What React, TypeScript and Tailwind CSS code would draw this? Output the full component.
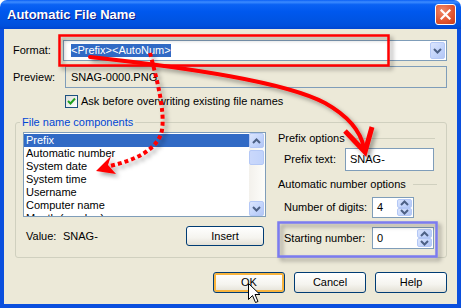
import React from "react";

const items = [
  "Prefix",
  "Automatic number",
  "System date",
  "System time",
  "Username",
  "Computer name",
  "Month (number)",
];

function Chevron({ up = false }: { up?: boolean }) {
  return (
    <svg width="9" height="6" viewBox="0 0 9 6">
      <path
        d={up ? "M1 5 L4.5 1.5 L8 5" : "M1 1 L4.5 4.5 L8 1"}
        fill="none"
        stroke="#4d6185"
        strokeWidth="2"
      />
    </svg>
  );
}

function ArrowBox({ up = false, className = "" }: { up?: boolean; className?: string }) {
  return (
    <div
      className={`flex items-center justify-center rounded-[2px] border border-[#b4c8f6] bg-[linear-gradient(135deg,#dbe5fd,#c1d3fb_60%,#b3c6f4)] ${className}`}
    >
      <Chevron up={up} />
    </div>
  );
}

function Spin({ value, w, h }: { value: string; w: string; h: string }) {
  return (
    <div className={`flex ${w} ${h} border border-[#7f9db9] bg-white`}>
      <div className="flex flex-1 items-center pl-[4px]">{value}</div>
      <div className="flex w-[16px] flex-col py-[1px] pr-[1px]">
        <ArrowBox up className="flex-1" />
        <ArrowBox className="flex-1" />
      </div>
    </div>
  );
}

function XpButton({ label, focused = false, w = "w-[72px]", h = "h-[21px]" }: { label: string; focused?: boolean; w?: string; h?: string }) {
  return (
    <div
      className={`flex ${w} ${h} items-center justify-center rounded-[3px] border border-[#003c74] bg-[linear-gradient(180deg,#ffffff_0%,#f5f4ef_60%,#e3e0d5_100%)] ${
        focused ? "shadow-[inset_0_0_0_2px_#f7b43e]" : ""
      }`}
    >
      {label}
    </div>
  );
}

function Heading({ text, endGap }: { text: string; endGap: string }) {
  return (
    <div className="flex h-[13px] items-center">
      <span>{text}</span>
      <div className={`ml-[7px] h-px flex-1 bg-[#d0d0bf] ${endGap}`} />
    </div>
  );
}

export default function App() {
  return (
    <div className="relative h-[308px] w-[461px] overflow-hidden bg-white font-['Liberation_Sans',Arial,sans-serif] text-[11px] leading-[13px] text-black">
      <div className="flex h-full w-full flex-col">
        {/* title bar */}
        <div className="flex h-[29px] shrink-0 items-center justify-between rounded-t-[7px] bg-[linear-gradient(180deg,#0a5ff5_0%,#3d8cff_7%,#0a62f4_16%,#0058ee_40%,#0054e3_70%,#0050dc_88%,#0046d2_100%)] pl-[7px] pr-[5px]">
          <span className="text-[13px] font-bold text-white [text-shadow:1px_1px_0_#0a1883]">
            Automatic File Name
          </span>
          <div className="flex h-[21px] w-[21px] items-center justify-center rounded-[3px] border border-white bg-[radial-gradient(circle_at_35%_30%,#f08a6a,#e0532f_60%,#c83c18)]">
            <svg width="11" height="11" viewBox="0 0 11 11">
              <path d="M1.5 1.5 L9.5 9.5 M9.5 1.5 L1.5 9.5" stroke="#fff" strokeWidth="2.2" strokeLinecap="square" />
            </svg>
          </div>
        </div>

        {/* body */}
        <div className="flex flex-1 flex-col border-x-4 border-b-4 border-[#0a4fde] bg-[#ece9d8] pl-[9px] pr-[10px]">
          <div className="mt-[11px] flex h-[21px] items-center">
            <div className="w-[50px]">Format:</div>
            <div className="flex h-[21px] flex-1 items-center border border-[#7f9db9] bg-white pl-[7px] pr-[1px]">
              <span className="h-[13px] bg-[#316ac5] text-white">&lt;Prefix&gt;&lt;AutoNum&gt;</span>
              <ArrowBox className="ml-auto h-[17px] w-[15px]" />
            </div>
          </div>

          <div className="mt-[5px] flex h-[22px] items-center">
            <div className="w-[52px]">Preview:</div>
            <div className="flex h-[22px] flex-1 items-center border border-[#7f9db9] pl-[5px]">SNAG-0000.PNG</div>
          </div>

          <div className="mt-[7px] flex h-[13px] items-center">
            <div className="w-[52px]" />
            <div className="flex h-[13px] w-[13px] items-center justify-center border border-[#1c5180] bg-[linear-gradient(135deg,#dcdcd7,#ffffff)]">
              <svg width="9" height="9" viewBox="0 0 9 9">
                <path d="M1 4 L3.5 6.5 L8 1.5" fill="none" stroke="#21a121" strokeWidth="2" />
              </svg>
            </div>
            <span className="ml-[3px]">Ask before overwriting existing file names</span>
          </div>

          <fieldset className="ml-[2px] mt-[7px] h-[143px] rounded-[3px] border border-[#d0d0bf] px-[7px] pt-[3px]">
            <legend className="-ml-[3px] px-[2px] leading-[14px] text-[#0046d5]">File name components</legend>
            <div className="flex">
              <div className="flex w-[243px] flex-col">
                <div className="flex h-[85px] overflow-hidden border border-[#7f9db9] bg-white">
                  <div className="flex-1 pt-[1px]">
                    {items.map((it, i) => (
                      <div
                        key={it}
                        className={`h-[13px] pl-[2px] ${i === 0 ? "bg-[#316ac5] text-white" : ""}`}
                      >
                        {it}
                      </div>
                    ))}
                  </div>
                  <div className="flex w-[16px] flex-col bg-[linear-gradient(90deg,#f3f1ec,#fdfdfa)]">
                    <ArrowBox up className="h-[15px] w-[15px]" />
                    <div className="mt-[2px] h-[15px] w-[15px] rounded-[2px] border border-[#b4c8f6] bg-[linear-gradient(90deg,#cad8fb,#c1d3fb)]" />
                    <ArrowBox className="mt-auto h-[15px] w-[15px]" />
                  </div>
                </div>
                <div className="mt-[9px] flex h-[20px] items-center pl-[3px]">
                  <span className="w-[37px]">Value:</span>
                  <span>SNAG-</span>
                  <div className="ml-auto mr-[2px]">
                    <XpButton label="Insert" w="w-[78px]" h="h-[20px]" />
                  </div>
                </div>
              </div>

              <div className="ml-[12px] flex w-[159px] flex-col">
                <Heading text="Prefix options" endGap="mr-[2px]" />
                <div className="mt-[3px] flex items-center">
                  <div className="w-[67px] pl-[6px]">Prefix text:</div>
                  <div className="flex h-[23px] w-[89px] items-center border border-[#7f9db9] bg-white pl-[4px]">SNAG-</div>
                </div>
                <div className="mt-[7px]">
                  <Heading text="Automatic number options" endGap="mr-0" />
                </div>
                <div className="mt-[6px] flex items-center">
                  <div className="w-[94px] pl-[6px]">Number of digits:</div>
                  <Spin value="4" w="w-[42px]" h="h-[21px]" />
                </div>
                <div className="mt-[9px] flex items-center">
                  <div className="w-[94px] pl-[6px]">Starting number:</div>
                  <Spin value="0" w="w-[62px]" h="h-[22px]" />
                </div>
              </div>
            </div>
          </fieldset>

          <div className="mt-[14px] flex justify-end gap-[9px]">
            <XpButton label="OK" focused />
            <XpButton label="Cancel" />
            <XpButton label="Help" />
          </div>
        </div>
      </div>

      {/* annotations drawn over the dialog */}
      <svg className="pointer-events-none absolute left-0 top-0" width="461" height="308" viewBox="0 0 461 308">
        <defs>
          <filter id="sh" x="-20%" y="-20%" width="140%" height="140%">
            <feDropShadow dx="3" dy="3" stdDeviation="2" floodColor="#000" floodOpacity="0.35" />
          </filter>
        </defs>
        <g filter="url(#sh)">
          <rect x="59.5" y="35.5" width="329" height="30" fill="none" stroke="#ff0000" strokeWidth="2.5" />
          <rect x="278.5" y="222.5" width="158" height="34" fill="none" stroke="#7b7bef" strokeWidth="2.5" />
          <path
            d="M90 57 C190 68, 285 82, 325 103 C350 117, 361 133, 364 148"
            fill="none"
            stroke="#ff0000"
            strokeWidth="4"
            strokeLinecap="round"
          />
          <path d="M345 131 L365 152 L372 127" fill="none" stroke="#ff0000" strokeWidth="5" strokeLinejoin="miter" />
          <path
            d="M150 53 C157 80, 165 110, 162 130 C158 150, 135 160, 110 166"
            fill="none"
            stroke="#ff0000"
            strokeWidth="4"
            strokeDasharray="4 3"
          />
          <path d="M96 171 L111 156 L108 165 L116 174 Z" fill="#ff0000" />
        </g>
        <path
          transform="translate(248.5 283.5)"
          d="M0 0 L0 16 L4 12 L7 19 L9.5 18 L6.5 11 L11.5 11 Z"
          fill="#fff"
          stroke="#000"
          strokeWidth="1"
        />
      </svg>
    </div>
  );
}
